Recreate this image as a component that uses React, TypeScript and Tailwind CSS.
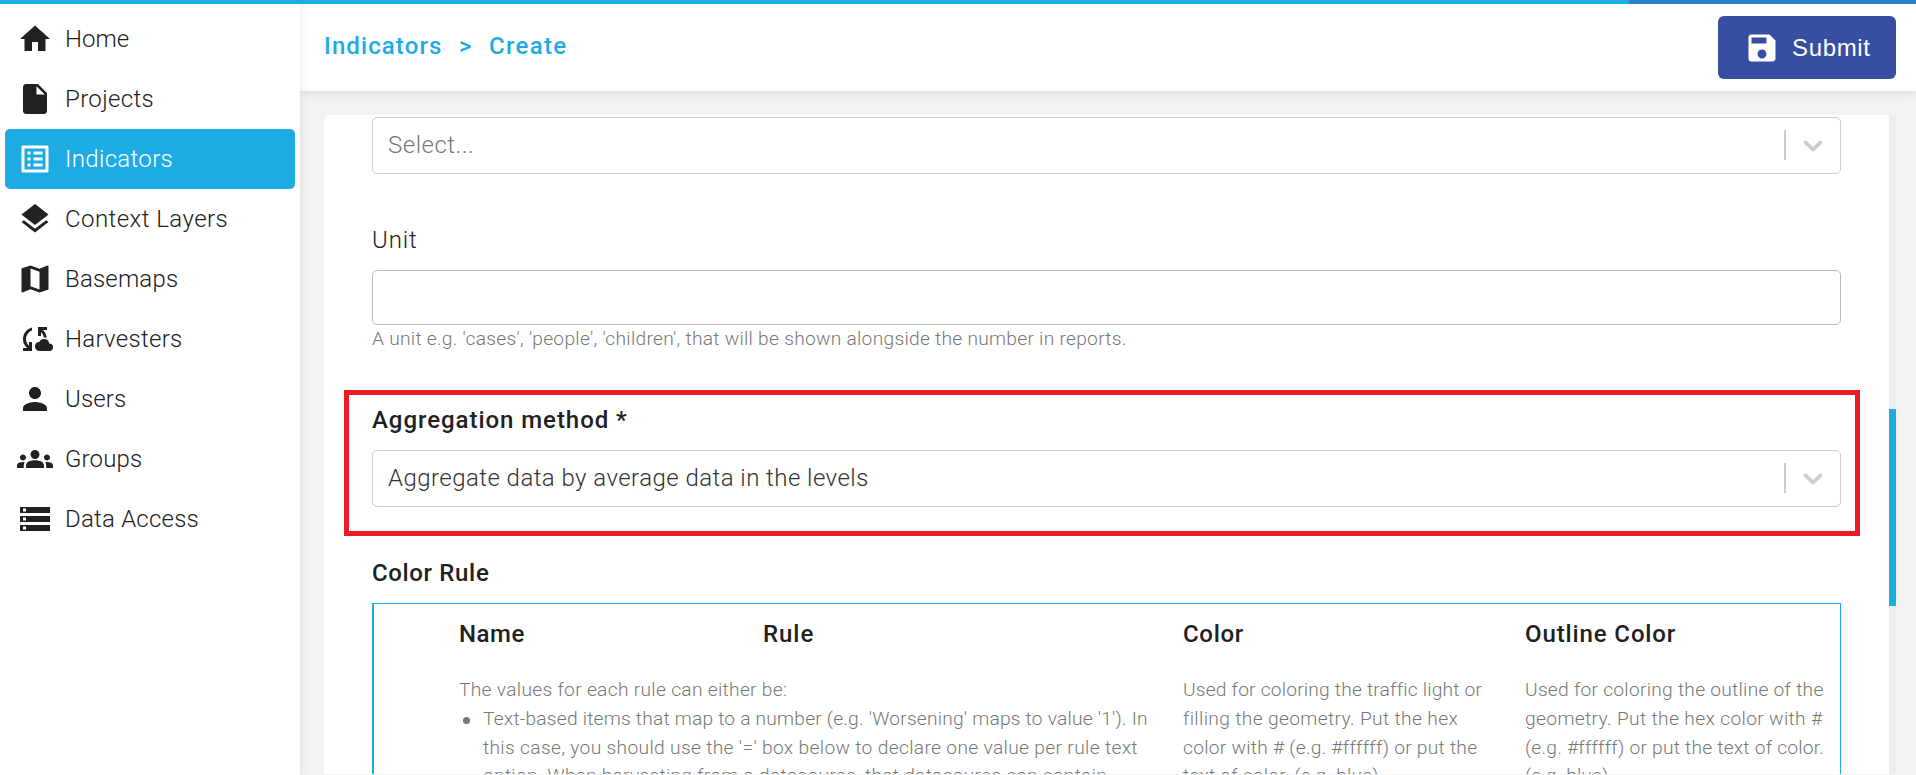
import type { IconType } from "react-icons";
import {
  MdCloudSync,
  MdGroups,
  MdHome,
  MdInsertDriveFile,
  MdLayers,
  MdListAlt,
  MdMap,
  MdPerson,
  MdSave,
  MdStorage,
} from "react-icons/md";

interface NavItem {
  label: string;
  icon: IconType;
  tracking: string;
  active?: boolean;
}

const navItems: NavItem[] = [
  { label: "Home", icon: MdHome, tracking: "tracking-[0px]" },
  { label: "Projects", icon: MdInsertDriveFile, tracking: "tracking-[0.36px]" },
  { label: "Indicators", icon: MdListAlt, tracking: "tracking-[0.33px]", active: true },
  { label: "Context Layers", icon: MdLayers, tracking: "tracking-[0.45px]" },
  { label: "Basemaps", icon: MdMap, tracking: "tracking-[0.18px]" },
  { label: "Harvesters", icon: MdCloudSync, tracking: "tracking-[0.3px]" },
  { label: "Users", icon: MdPerson, tracking: "tracking-[0.15px]" },
  { label: "Groups", icon: MdGroups, tracking: "tracking-[0.15px]" },
  { label: "Data Access", icon: MdStorage, tracking: "tracking-[0.22px]" },
];

function Sidebar() {
  return (
    <nav className="z-10 flex w-[300px] shrink-0 flex-col bg-white px-[5px] pt-[5px] shadow-[0_0_10px_rgba(0,0,0,0.1)]">
      {navItems.map(({ label, icon: Icon, tracking, active }) => (
        <a
          key={label}
          className={`flex h-[60px] shrink-0 items-center gap-3 rounded-[5px] pl-3 text-2xl font-light ${
            active ? "bg-[#1eabe3] text-white" : "text-[#212121]"
          }`}
        >
          <Icon className="size-9 shrink-0" />
          <span className={`whitespace-nowrap ${tracking}`}>{label}</span>
        </a>
      ))}
    </nav>
  );
}

function Header() {
  return (
    <header className="z-[5] flex h-[87px] shrink-0 items-center justify-between bg-white pr-5 pl-6 shadow-[0_0_10px_rgba(0,0,0,0.15)]">
      <div className="mb-1 flex items-center text-2xl font-medium text-[#1eabe3]">
        <span className="w-[135px] tracking-[1.1px]">Indicators</span>
        <span className="w-[30px]">&gt;</span>
        <span className="tracking-[1.3px]">Create</span>
      </div>
      <button className="flex h-[63px] w-[178px] items-center rounded-md bg-[#384ea2] pl-[26px] text-white">
        <MdSave className="size-9 shrink-0" />
        <span className="ml-3 font-['Liberation_Sans',sans-serif] text-2xl tracking-[0.65px]">Submit</span>
      </button>
    </header>
  );
}

function Label({ children, className }: { children: string; className: string }) {
  return <div className={`mb-3 h-9 text-2xl leading-9 text-[#212121] ${className}`}>{children}</div>;
}

function Select({ children, className }: { children: string; className: string }) {
  return (
    <div className="flex h-[57px] items-center rounded-[5px] border border-[#cccccc] pb-0.5 pl-[15px] text-2xl font-light">
      <span className={`flex-1 ${className}`}>{children}</span>
      <span className="h-[30px] w-0.5 bg-[#cccccc]" />
      <svg viewBox="0 0 20 20" className="mr-[11px] ml-[11px] size-8 fill-[#cccccc]">
        <path d="M4.516 7.548c0.436-0.446 1.043-0.481 1.576 0l3.908 3.747 3.908-3.747c0.533-0.481 1.141-0.446 1.574 0 0.436 0.445 0.408 1.197 0 1.615-0.406 0.418-4.695 4.502-4.695 4.502-0.217 0.223-0.502 0.335-0.787 0.335s-0.57-0.112-0.789-0.335c0 0-4.287-4.084-4.695-4.502s-0.436-1.17 0-1.615z" />
      </svg>
    </div>
  );
}

function ColorRuleTable() {
  return (
    <div className="h-[400px] border border-l-2 border-[#1eabe3] pt-3 pl-[85px]">
      <div className="flex h-9 items-center text-2xl font-medium whitespace-nowrap text-[#212121]">
        <div className="w-[304px] tracking-[0.54px]">Name</div>
        <div className="w-[420px] tracking-[0.95px]">Rule</div>
        <div className="w-[342px] tracking-[0.7px]">Color</div>
        <div className="tracking-[0.88px]">Outline Color</div>
      </div>
      <div className="mt-6 flex text-[19.2px] leading-[28.8px] font-light whitespace-nowrap text-[#777777]">
        <div className="w-[724px]">
          <div className="tracking-[0.3px]">The values for each rule can either be:</div>
          <div className="flex">
            <span className="mt-3 ml-1 size-[7px] rounded-full bg-[#777777]" />
            <div className="ml-[13px]">
              <div className="tracking-[0.21px]">
                Text-based items that map to a number (e.g. 'Worsening' maps to value '1'). In
              </div>
              <div className="tracking-[0.33px]">
                this case, you should use the '=' box below to declare one value per rule text
              </div>
              <div className="tracking-[0.26px]">
                option. When harvesting from a datasource, that datasource can contain
              </div>
            </div>
          </div>
        </div>
        <div className="w-[342px]">
          <div className="tracking-[0.2px]">Used for coloring the traffic light or</div>
          <div className="tracking-[0.35px]">filling the geometry. Put the hex</div>
          <div className="tracking-[0.26px]">color with # (e.g. #ffffff) or put the</div>
          <div className="tracking-[0.2px]">text of color. (e.g. blue)</div>
        </div>
        <div>
          <div className="tracking-[0.26px]">Used for coloring the outline of the</div>
          <div className="tracking-[0.35px]">geometry. Put the hex color with #</div>
          <div className="tracking-[0.23px]">(e.g. #ffffff) or put the text of color.</div>
          <div className="tracking-[0.1px]">(e.g. blue)</div>
        </div>
      </div>
    </div>
  );
}

function Form() {
  return (
    <div className="flex h-[659px] overflow-hidden rounded-tl-[5px] bg-white">
      <div className="flex-1 pt-0.5 pr-12 pl-12">
        <Select className="tracking-[0.5px] text-[#777777]">Select...</Select>

        <div className="pt-12">
          <Label className="font-light tracking-[0.9px]">Unit</Label>
          <div className="h-[55px] rounded-[5px] border border-[#bbbbbb]" />
          <div className="h-7 text-[19.2px] leading-7 font-light tracking-[0.27px] text-[#777777]">
            A unit e.g. 'cases', 'people', 'children', that will be shown alongside the number in reports.
          </div>
        </div>

        <div className="relative mt-[49px]">
          <Label className="font-medium tracking-[0.95px]">Aggregation method *</Label>
          <Select className="tracking-[0.45px] text-[#333333]">Aggregate data by average data in the levels</Select>
          <div className="absolute -top-3 -left-7 h-[146px] w-[1516px] border-[5px] border-[#ed1c24]" />
        </div>

        <div className="pt-12">
          <Label className="font-medium tracking-[0.65px]">Color Rule</Label>
          <ColorRuleTable />
        </div>
      </div>
      <div className="w-[7px] bg-[#ededed] pt-[294px]">
        <div className="h-[197px] bg-[#1eabe3]" />
      </div>
    </div>
  );
}

export default function App() {
  return (
    <div className="flex h-[775px] w-[1916px] flex-col overflow-hidden bg-[#f3f3f3] font-[Roboto,sans-serif]">
      <div className="z-20 flex h-1 shrink-0 bg-[#2a7fc9]">
        <div className="w-[1629px] bg-[#1eabe3]" />
      </div>
      <div className="flex min-h-0 flex-1">
        <Sidebar />
        <div className="flex min-w-0 flex-1 flex-col">
          <Header />
          <main className="pt-6 pr-5 pl-6">
            <Form />
          </main>
        </div>
      </div>
    </div>
  );
}
